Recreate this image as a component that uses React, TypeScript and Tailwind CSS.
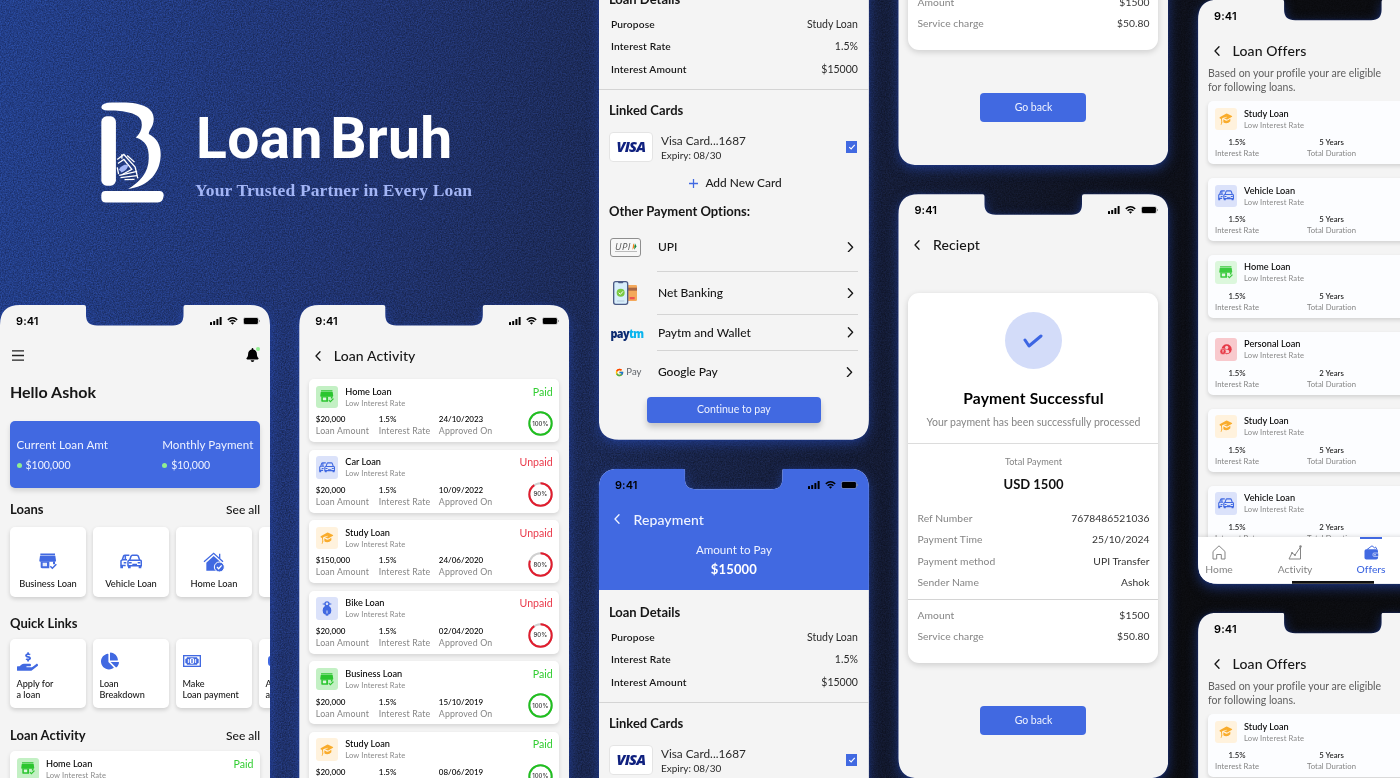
import type { ReactNode } from "react";
import { FaBell, FaChartPie, FaHandHoldingUsd } from "react-icons/fa";
import { FcGoogle } from "react-icons/fc";

type IconName = "store" | "cars" | "study" | "bike" | "person";

const tones: Record<string, string> = {
  green: "bg-[#c3f0c4] text-[#2bc52f]",
  mint: "bg-[#dcf7dc] text-[#3ccb3f]",
  blue: "bg-[#dbe2fa] text-[#4169e1]",
  orange: "bg-[#fff2dd] text-[#f9ac2c]",
  red: "bg-[#f8c9cd] text-[#e63946]",
};

function StoreIcon({ className }: { className: string }) {
  return (
    <svg viewBox="0 0 54 50" className={className} fill="currentColor">
      <path d="M4 1h44v5H4zM3 8h46l2 14c0 3-2 4-4 4H5c-3 0-4-2-4-4z" />
      <path d="M5 25h26v20H9c-3 0-4-1-4-4z" />
      <path d="M11 29h13v10H11z" fill="#fff" fillOpacity=".85" />
      <path d="M42 25h6v8h-6z" />
      <path d="M34 39l6 6 12-12" fill="none" stroke="currentColor" strokeWidth="4.500" />
    </svg>
  );
}

function CarsIcon({ className }: { className: string }) {
  return (
    <svg viewBox="0 0 66 44" className={className} fill="none" stroke="currentColor" strokeWidth="4.500">
      <path d="M29 18l4-12q1-3 4-3h14q3 0 4 3l4 12" />
      <path d="M24 35V22q0-4 4-4h32q4 0 4 4v13z" />
      <path d="M27 26h8M53 26h8M37 31h14" />
      <path d="M24 34h8v8h-8zM56 34h8v8h-8z" fill="currentColor" stroke="none" />
      <path d="M28 3H15q-3 0-4 2L7 17l-4 3v14h14M6 17h15M11 26h8M16 5v14" />
      <path d="M1 34h8v8H1z" fill="currentColor" stroke="none" />
    </svg>
  );
}

function StudyIcon({ className }: { className: string }) {
  return (
    <svg viewBox="0 0 40 36" className={className} fill="currentColor">
      <path d="M1 13L20 2q2-1 4 0l14 7q1 1 0 2L25 19q-2 1-4 0l-7-3 9-3-1-2-12 4q-2 1-2 3l1 11q-3 3-3 7H4l2-10-1-8-4-2q-1-1 0-2z" />
      <path d="M12 19l8 4q3 1 6-1l7-5v8q-5 6-12 6-6 0-9-3z" />
    </svg>
  );
}

function BikeIcon({ className }: { className: string }) {
  return (
    <svg viewBox="0 0 30 44" className={className} fill="currentColor">
      <path d="M2 7h8v3H2zM20 7h8v3h-8z" />
      <circle cx="15" cy="8" r="6" fill="none" stroke="currentColor" strokeWidth="4" />
      <path d="M10 13h10q8 6 8 15 0 8-5 11h-3q0 5-5 5t-5-5H7q-5-3-5-11 0-9 8-15z" />
      <path d="M13.500 28h3v9h-3z" fill="#dbe2fa" />
    </svg>
  );
}

function PersonIcon({ className }: { className: string }) {
  return (
    <svg viewBox="0 0 36 32" className={className} fill="currentColor">
      <circle cx="20" cy="15" r="15" />
      <circle cx="20" cy="10" r="5" fill="#f8c9cd" />
      <path d="M12 22q1-6 8-6t8 6-8 5q-8 0-8-5z" fill="#f8c9cd" />
      <circle cx="9" cy="22" r="9" stroke="#f8c9cd" strokeWidth="1.5" />
      <path d="M6 18h6M6 21h6M7 18q5 0 4 3-1 2-4 2l4 4" fill="none" stroke="#f8c9cd" strokeWidth="1.5" />
    </svg>
  );
}

function LoanIcon({ name }: { name: IconName }) {
  if (name === "store") return <StoreIcon className="h-[13px] w-[14px]" />;
  if (name === "cars") return <CarsIcon className="h-[11px] w-[16px]" />;
  if (name === "study") return <StudyIcon className="h-[12px] w-[14px]" />;
  if (name === "bike") return <BikeIcon className="h-[15px] w-[10px]" />;
  return <PersonIcon className="h-[11px] w-[12px]" />;
}

function Tile({ name, tone }: { name: IconName; tone: string }) {
  return (
    <div className={`flex h-[22.5px] w-[22.5px] shrink-0 items-center justify-center rounded-[3px] ${tones[tone]}`}>
      <LoanIcon name={name} />
    </div>
  );
}

function Chevron({ className, back = false }: { className: string; back?: boolean }) {
  return (
    <svg viewBox="0 0 6 10" className={className} fill="none" stroke="currentColor" strokeWidth="1.3" strokeLinecap="round" strokeLinejoin="round">
      <path d={back ? "M5 .8L1 5l4 4.2" : "M1 .8L5 5 1 9.2"} />
    </svg>
  );
}

function StatusBar() {
  return (
    <div className="flex h-[20px] shrink-0 items-center justify-between pt-[12px] pr-[10.500px] pl-[16px] text-black">
      <span className="font-[Inter] text-[11px] leading-[12px] font-semibold tracking-[0.1px]">9:41</span>
      <span className="flex items-center gap-[5px]">
        <svg viewBox="0 0 12 8" className="h-[8px] w-[12px]" fill="currentColor">
          <rect x="0" y="5" width="2" height="3" rx=".5" />
          <rect x="3.2" y="4" width="2" height="4" rx=".5" />
          <rect x="6.4" y="2" width="2" height="6" rx=".5" />
          <rect x="9.6" y="0" width="2" height="8" rx=".5" />
        </svg>
        <svg viewBox="0 0 12 9" className="h-[8px] w-[11px]" fill="none" stroke="currentColor" strokeWidth="1.6">
          <path d="M.7 3.2q5.300-4.600 10.600 0M2.700 5.300q3.300-2.800 6.600 0" />
          <path d="M4.400 6.800q1.600-1.300 3.200 0L6 8.500z" fill="currentColor" strokeWidth=".3" />
        </svg>
        <svg viewBox="0 0 17 8" className="h-[8px] w-[17px]">
          <rect x=".4" y=".4" width="15" height="7.200" rx="2" fill="none" stroke="#999" strokeWidth=".5" />
          <rect x=".9" y=".9" width="14" height="6.200" rx="1.300" fill="#000" />
          <path d="M16 2.700q1 .5 1 1.300t-1 1.300z" fill="#888" />
        </svg>
      </span>
    </div>
  );
}

function Phone({ children }: { children: ReactNode }) {
  return (
    <div className="h-[584px] w-[270px] shrink-0 [filter:drop-shadow(0_0_1px_rgba(30,60,160,0.5))_drop-shadow(0_4px_6px_rgba(38,76,190,0.55))]">
      <div className="flex h-full w-full flex-col overflow-hidden bg-[#f4f4f4] [clip-path:path('M0_20Q0_0_20_0H84Q86_0_86_2V10Q86_20.500_97_20.500H173Q183.500_20.500_183.500_10V2Q183.500_0_185.500_0H250Q270_0_270_20V564Q270_584_250_584H20Q0_584_0_564Z')]">
        {children}
      </div>
    </div>
  );
}

function TitleBar({ title, className }: { title: string; className: string }) {
  return (
    <div className={`flex h-[20px] shrink-0 items-center gap-[13px] pl-[15.500px] text-[14px] font-medium tracking-[0.12px] ${className}`}>
      <Chevron back className="h-[10px] w-[6px]" />
      <span>{title}</span>
    </div>
  );
}

function Ring({ value }: { value: number }) {
  const length = 2 * Math.PI * 11.2;
  const done = value === 100;
  return (
    <div className="grid h-[25px] w-[25px] place-items-center">
      <svg viewBox="0 0 25 25" className="col-start-1 row-start-1 h-[25px] w-[25px] -rotate-90" fill="none" strokeWidth="2">
        <circle cx="12.5" cy="12.5" r="11.2" stroke="#d0d0d0" />
        <circle cx="12.5" cy="12.5" r="11.2" stroke={done ? "#20c020" : "#e11d2e"} strokeDasharray={`${(length * value) / 100} ${length}`} />
      </svg>
      <span className="col-start-1 row-start-1 font-[Inter] text-[6px] leading-none font-medium text-[#333]">{value}%</span>
    </div>
  );
}

type Activity = { name: string; icon: IconName; tone: string; amount: string; date: string; value: number };

const activities: Activity[] = [
  { name: "Home Loan", icon: "store", tone: "green", amount: "$20,000", date: "24/10/2023", value: 100 },
  { name: "Car Loan", icon: "cars", tone: "blue", amount: "$20,000", date: "10/09/2022", value: 90 },
  { name: "Study Loan", icon: "study", tone: "orange", amount: "$150,000", date: "24/06/2020", value: 80 },
  { name: "Bike Loan", icon: "bike", tone: "blue", amount: "$20,000", date: "02/04/2020", value: 90 },
  { name: "Business Loan", icon: "store", tone: "green", amount: "$20,000", date: "15/10/2019", value: 100 },
  { name: "Study Loan", icon: "study", tone: "orange", amount: "$20,000", date: "08/06/2019", value: 100 },
];

function CardHeading({ name, icon, tone }: { name: string; icon: IconName; tone: string }) {
  return (
    <div className="flex h-[23px] gap-[7px]">
      <Tile name={icon} tone={tone} />
      <div className="whitespace-nowrap">
        <div className="text-[9.200px] leading-[12px] font-medium text-black">{name}</div>
        <div className="text-[7.600px] leading-[11.500px] tracking-[0.1px] text-[#8a8a8a]">Low Interest Rate</div>
      </div>
    </div>
  );
}

function ActivityCard({ item }: { item: Activity }) {
  const paid = item.value === 100;
  const facts = [
    [item.amount, "Loan Amount"],
    ["1.5%", "Interest Rate"],
    [item.date, "Approved On"],
  ];
  return (
    <div className="flex h-[63px] shrink-0 justify-between rounded-[5px] bg-white px-[6.500px] pt-[6.500px] shadow-[0_2px_4px_rgba(0,0,0,0.13)]">
      <div>
        <CardHeading name={item.name} icon={item.icon} tone={item.tone} />
        <div className="mt-[4.800px] grid grid-cols-[63px_60px_60px] whitespace-nowrap">
          {facts.map(([value, label]) => (
            <div key={label}>
              <div className="text-[8px] leading-[12px] font-medium text-black">{value}</div>
              <div className="text-[8.800px] leading-[11.500px] tracking-[0.16px] text-[#858585]">{label}</div>
            </div>
          ))}
        </div>
      </div>
      <div className="flex flex-col items-end gap-[12.500px]">
        <span className={`text-[10.600px] leading-[13px] ${paid ? "text-[#32cd32]" : "text-[#ea3a4b]"}`}>{paid ? "Paid" : "Unpaid"}</span>
        <Ring value={item.value} />
      </div>
    </div>
  );
}

function SectionTitle({ title, link, className }: { title: string; link?: string; className: string }) {
  return (
    <div className={`flex h-[16px] shrink-0 items-center justify-between px-[10px] text-[13px] ${className}`}>
      <span className="font-bold">{title}</span>
      {link && <span className="text-[12px] font-medium">{link}</span>}
    </div>
  );
}

function HouseIcon() {
  return (
    <svg viewBox="0 0 66 64" className="h-[22px] w-[22px]">
      <path d="M3 31L32 6l28 25M50 7v15" fill="none" stroke="#4169e1" strokeWidth="4" />
      <path d="M32 14l23 20v24H10V34z" fill="#4169e1" />
      <circle cx="49" cy="47" r="15" fill="#4169e1" stroke="#fff" strokeWidth="3" />
      <path d="M42 47l5 5 9-10" fill="none" stroke="#fff" strokeWidth="4" />
    </svg>
  );
}

function CashIcon() {
  return (
    <svg viewBox="0 0 54 36" className="h-[12px] w-[18px]" fill="none" stroke="#4169e1">
      <rect x="2" y="2" width="50" height="32" strokeWidth="4" />
      <path d="M7 12q5 0 5-5h30q0 5 5 5v12q-5 0-5 5H12q0-5-5-5z" fill="#4169e1" stroke="none" />
      <ellipse cx="27" cy="18" rx="7" ry="9" fill="#fff" stroke="none" />
      <path d="M27 11v14" strokeWidth="4" />
      <path d="M16 12v12M38 12v12" stroke="#fff" strokeWidth="3" />
    </svg>
  );
}

function HomePhone() {
  return (
    <Phone>
      <StatusBar />
      <div className="mt-[22px] flex h-[16px] shrink-0 items-center justify-between pr-[11px] pl-[12px]">
        <svg viewBox="0 0 12 11" className="h-[11px] w-[12px]" stroke="#222" strokeWidth="1.300">
          <path d="M0 .8h12M0 5.500h12M0 10.200h12" />
        </svg>
        <div className="relative">
          <FaBell className="h-[14px] w-[13px] text-black" />
          <span className="absolute -top-[1px] -right-[1px] h-[4px] w-[4px] rounded-full bg-[#90ee90]" />
        </div>
      </div>
      <div className="mt-[19px] flex h-[20px] shrink-0 items-center pl-[10px] text-[16px] font-bold">Hello Ashok</div>
      <div className="mx-[10px] mt-[19px] flex h-[67px] shrink-0 justify-between rounded-[5px] bg-[#4169e1] px-[6.500px] pt-[16px] text-[#eef2ff] shadow-[0_3px_5px_rgba(0,0,0,0.13)]">
        {[
          ["Current Loan Amt", "$100,000"],
          ["Monthly Payment", "$10,000"],
        ].map(([label, value]) => (
          <div key={label}>
            <div className="text-[11.600px] leading-[16px] tracking-[0.08px]">{label}</div>
            <div className="mt-[4px] flex items-center gap-[4px] text-[10.500px] leading-[16px]">
              <span className="h-[5px] w-[5px] rounded-full bg-[#90ee90]" />
              {value}
            </div>
          </div>
        ))}
      </div>
      <SectionTitle className="mt-[14px]" title="Loans" link="See all" />
      <div className="mt-[9px] ml-[10px] flex gap-[7px]">
        {["Business Loan", "Vehicle Loan", "Home Loan", ""].map((name) => (
          <div key={name} className="flex h-[70px] w-[76px] shrink-0 flex-col items-center rounded-[5px] bg-white pt-[23px] text-[9.300px] font-medium shadow-[0_2px_4px_rgba(0,0,0,0.16)]">
            <div className="flex h-[23px] items-center text-[#4169e1]">
              {name === "Business Loan" && <StoreIcon className="h-[17px] w-[18px]" />}
              {name === "Vehicle Loan" && <CarsIcon className="h-[15px] w-[22px]" />}
              {name === "Home Loan" && <HouseIcon />}
            </div>
            <span className="mt-[5px] leading-[12px] whitespace-nowrap">{name}</span>
          </div>
        ))}
      </div>
      <SectionTitle className="mt-[19px]" title="Quick Links" />
      <div className="mt-[7px] ml-[10px] flex gap-[7px]">
        {[
          ["Apply for", "a loan"],
          ["Loan", "Breakdown"],
          ["Make", "Loan payment"],
          ["A", "a"],
        ].map(([top, bottom], i) => (
          <div key={top} className="flex h-[69px] w-[76px] shrink-0 flex-col rounded-[5px] bg-white px-[6.500px] pt-[10px] text-[9.100px] font-medium shadow-[0_2px_4px_rgba(0,0,0,0.16)]">
            <div className="flex h-[24px] items-center text-[#4169e1]">
              {i === 0 && <FaHandHoldingUsd className="h-[21px] w-[21px]" />}
              {i === 1 && <FaChartPie className="ml-[1.500px] h-[18px] w-[18px]" />}
              {i === 2 && <CashIcon />}
              {i === 3 && <span className="ml-[2px] h-[10px] w-[10px] rounded-[3px] bg-[#4169e1]" />}
            </div>
            <span className="mt-[4.500px] leading-[11.500px] whitespace-nowrap">
              {top}
              <br />
              {bottom}
            </span>
          </div>
        ))}
      </div>
      <SectionTitle className="mt-[20px]" title="Loan Activity" link="See all" />
      <div className="mx-[10px] mt-[7px]">
        <ActivityCard item={activities[0]} />
      </div>
    </Phone>
  );
}

function ActivityPhone() {
  return (
    <Phone>
      <StatusBar />
      <TitleBar title="Loan Activity" className="mt-[20.500px]" />
      <div className="mx-[10px] mt-[13.500px] flex flex-col gap-[7.600px]">
        {activities.map((item) => (
          <ActivityCard key={item.date} item={item} />
        ))}
      </div>
    </Phone>
  );
}

function OptionRow({ label, logo, className, arrow }: { label: string; logo: ReactNode; className: string; arrow: string }) {
  return (
    <div className={`flex shrink-0 items-center text-[12px] font-medium ${className}`}>
      <div className="flex w-[59px] justify-center">{logo}</div>
      <span className="flex-1">{label}</span>
      <Chevron className={`h-[10.500px] w-[7px] ${arrow}`} />
    </div>
  );
}

function NetBankingLogo() {
  return (
    <svg viewBox="0 0 72 72" className="mr-[6px] h-[24px] w-[24px]">
      <rect x="38" y="12" width="34" height="48" rx="4" fill="#f4a95b" />
      <path d="M38 20h34v9H38z" fill="#a86543" />
      <path d="M50 48h15v7H50z" fill="#ef5350" />
      <rect x="2" y="2" width="42" height="68" rx="6" fill="#d8eefb" stroke="#4c5b86" strokeWidth="4" />
      <path d="M14 2h18l-3 5H17z" fill="#4c5b86" />
      <circle cx="23" cy="35" r="12" fill="#7ac943" />
      <path d="M17 35l5 5 8-9" fill="none" stroke="#fff" strokeWidth="3" />
      <path d="M12 60h22" stroke="#b4c8da" strokeWidth="3" />
    </svg>
  );
}

function UpiLogo() {
  return (
    <div className="mr-[5px] flex h-[19px] w-[31px] flex-col items-center justify-center rounded-[3px] border border-[#8e8e8e] bg-[#f7f7f7]">
      <div className="flex items-center gap-[1px]">
        <span className="font-['Open_Sans'] text-[9.500px] leading-[9px] font-medium tracking-[0.5px] text-[#555] italic">UPI</span>
        <svg viewBox="0 0 6 8" className="h-[7px] w-[5px]">
          <path d="M1.500 0l2 4-3 4z" fill="#f58220" />
          <path d="M3.500 0l2 4-3 4z" fill="#128a43" />
        </svg>
      </div>
      <span className="h-[1px] w-[22px] bg-[#bbb]" />
    </div>
  );
}

function RepaymentPhone() {
  return (
    <Phone>
      <div className="h-[121.500px] shrink-0 bg-[#4169e1]">
        <StatusBar />
        <TitleBar title="Repayment" className="mt-[20.500px] text-[#f0f4ff]" />
        <div className="mt-[12px] text-center text-[11.600px] leading-[18px] text-[#eef2ff]">Amount to Pay</div>
        <div className="mt-[1px] text-center text-[13px] leading-[18px] font-bold tracking-[0.2px] text-white">$15000</div>
      </div>
      <SectionTitle className="mt-[14.500px]" title="Loan Details" />
      <div className="mt-[5px] flex flex-col px-[12px] text-[10.200px] leading-[22.500px]">
        {[
          ["Puropose", "Study Loan"],
          ["Interest Rate", "1.5%"],
          ["Interest Amount", "$15000"],
        ].map(([label, value]) => (
          <div key={label} className="flex justify-between">
            <span className="font-semibold tracking-[0.16px]">{label}</span>
            <span className="-mr-[1px] text-[10.500px] text-[#2a2a2a]">{value}</span>
          </div>
        ))}
      </div>
      <div className="mt-[9px] h-px shrink-0 bg-[#d4d4d4]" />
      <SectionTitle className="mt-[13px]" title="Linked Cards" />
      <div className="mt-[13px] flex h-[30px] shrink-0 items-center pr-[11.500px] pl-[10px]">
        <div className="flex h-[30px] w-[44px] items-center justify-center rounded-[4px] border border-[#e4e4e4] bg-white font-['Open_Sans'] text-[14.500px] font-extrabold tracking-[-0.8px] text-[#10217f] italic">
          VISA
        </div>
        <div className="ml-[8px] flex-1 text-[#2a2a2a]">
          <div className="text-[11.800px] leading-[15px]">Visa Card...1687</div>
          <div className="text-[10px] leading-[14px]">Expiry: 08/30</div>
        </div>
        <div className="flex h-[11.500px] w-[11.500px] items-center justify-center bg-[#4169e1]">
          <svg viewBox="0 0 8 7" className="h-[6px] w-[8px]" fill="none" stroke="#fff" strokeWidth="1.300">
            <path d="M.8 3.600L3 5.800 7.200.9" />
          </svg>
        </div>
      </div>
      <div className="mt-[12px] flex h-[18px] shrink-0 items-center gap-[7px] pl-[90.500px] text-[11.900px] font-medium text-[#222]">
        <svg viewBox="0 0 10 10" className="h-[9px] w-[9px]" stroke="#4169e1" strokeWidth="1.400">
          <path d="M5 0v10M0 5h10" />
        </svg>
        Add New Card
      </div>
      <SectionTitle className="mt-[12px]" title="Other Payment Options:" />
      <OptionRow label="UPI" className="mt-[17px] h-[20px]" arrow="mr-[14.500px]" logo={<UpiLogo />} />
      <div className="mt-[14px] mr-[11px] ml-[58px] h-px shrink-0 bg-[#d4d4d4]" />
      <OptionRow label="Net Banking" className="mt-[9px] h-[24px]" arrow="mr-[15px]" logo={<NetBankingLogo />} />
      <div className="mt-[9px] mr-[11px] ml-[58px] h-px shrink-0 bg-[#d4d4d4]" />
      <OptionRow
        label="Paytm and Wallet"
        className="mt-[7.500px] h-[20px]"
        arrow="mr-[14.500px]"
        logo={
          <span className="-ml-[2px] scale-x-[0.83] font-['Open_Sans'] text-[13px] leading-[14px] font-extrabold tracking-[-0.7px] text-[#0b2a70]">
            pay<span className="text-[#0bb5ee]">tm</span>
          </span>
        }
      />
      <div className="mt-[7.500px] mr-[11px] ml-[58px] h-px shrink-0 bg-[#d4d4d4]" />
      <OptionRow
        label="Google Pay"
        className="mt-[11px] h-[20px]"
        arrow="mr-[15.500px]"
        logo={
          <span className="flex items-center gap-[2px] text-[9.500px] font-normal text-[#5f6368]">
            <FcGoogle className="h-[9px] w-[9px]" />
            Pay
          </span>
        }
      />
      <div className="mt-[14.500px] ml-[48px] flex h-[26px] w-[174px] shrink-0 items-center justify-center rounded-[4px] bg-[#4169e1] text-[10.500px] text-[#eef2ff] shadow-[0_4px_6px_rgba(0,0,0,0.2)]">
        Continue to pay
      </div>
    </Phone>
  );
}

function PlainRows({ rows }: { rows: string[][] }) {
  return (
    <>
      {rows.map(([label, value]) => (
        <div key={label} className="flex justify-between px-[9px] text-[10.300px] leading-[21.500px] tracking-[0.05px]">
          <span className="text-[#858585]">{label}</span>
          <span className="text-[#333]">{value}</span>
        </div>
      ))}
    </>
  );
}

function ReceiptPhone() {
  return (
    <Phone>
      <StatusBar />
      <TitleBar title="Reciept" className="mt-[20.700px]" />
      <div className="mx-[10px] mt-[38.300px] flex h-[370px] shrink-0 flex-col rounded-[11px] bg-white shadow-[0_2px_6px_rgba(0,0,0,0.16)]">
        <div className="mt-[19px] flex h-[57px] w-[57px] shrink-0 items-center justify-center self-center rounded-full bg-[#d3dcf9]">
          <svg viewBox="0 0 20 14" className="h-[14px] w-[20px]" fill="none" stroke="#3d66e3" strokeWidth="3" strokeLinecap="round" strokeLinejoin="round">
            <path d="M2 6l4 6L18 2" />
          </svg>
        </div>
        <div className="mt-[19px] text-center text-[15.600px] leading-[20px] font-bold tracking-[0.18px] text-black">Payment Successful</div>
        <div className="mt-[4px] text-center text-[10.500px] leading-[20px] text-[#858585]">Your payment has been successfully processed</div>
        <div className="mt-[10.500px] h-px shrink-0 bg-[#dcdcdc]" />
        <div className="mt-[11.500px] text-center text-[9.200px] leading-[14px] text-[#858585]">Total Payment</div>
        <div className="mt-[6px] mb-[14.500px] text-center text-[13px] leading-[18px] font-bold text-[#111]">USD 1500</div>
        <PlainRows
          rows={[
            ["Ref Number", "7678486521036"],
            ["Payment Time", "25/10/2024"],
            ["Payment method", "UPI Transfer"],
            ["Sender Name", "Ashok"],
          ]}
        />
        <div className="mt-[5px] mb-[5px] h-px shrink-0 bg-[#d4d4d4]" />
        <PlainRows
          rows={[
            ["Amount", "$1500"],
            ["Service charge", "$50.80"],
          ]}
        />
      </div>
      <div className="mt-[43px] flex h-[29px] w-[106px] shrink-0 items-center justify-center self-center rounded-[4px] bg-[#4169e1] text-[10.500px] text-[#eef2ff]">Go back</div>
    </Phone>
  );
}

const offers: { name: string; icon: IconName; tone: string; years: number }[] = [
  { name: "Study Loan", icon: "study", tone: "orange", years: 5 },
  { name: "Vehicle Loan", icon: "cars", tone: "blue", years: 5 },
  { name: "Home Loan", icon: "store", tone: "mint", years: 5 },
  { name: "Personal Loan", icon: "person", tone: "red", years: 2 },
  { name: "Study Loan", icon: "study", tone: "orange", years: 5 },
  { name: "Vehicle Loan", icon: "cars", tone: "blue", years: 2 },
];

function OffersPhone() {
  return (
    <Phone>
      <StatusBar />
      <TitleBar title="Loan Offers" className="mt-[21px]" />
      <div className="mt-[6.500px] shrink-0 pl-[10px] text-[10.500px] leading-[13.700px] text-[#606060]">
        Based on your profile your are eligible
        <br />
        for following loans.
      </div>
      <div className="mt-[6.500px] flex min-h-0 flex-1 flex-col gap-[13.900px] overflow-hidden px-[10px]">
        {offers.map((offer, i) => (
          <div key={i} className="h-[63px] shrink-0 rounded-[5px] bg-[#fcfdff] px-[6.500px] pt-[6.500px] shadow-[0_2px_4px_rgba(0,0,0,0.14)]">
            <CardHeading name={offer.name} icon={offer.icon} tone={offer.tone} />
            <div className="mt-[6.500px] grid grid-cols-[45px_144px] text-center whitespace-nowrap">
              <span className="text-[7.800px] leading-[11px] font-medium">1.5%</span>
              <span className="text-[7.800px] leading-[11px] font-medium">{offer.years} Years</span>
              <span className="text-[7.700px] leading-[11px] tracking-[0.06px] text-[#858585]">Interest Rate</span>
              <span className="text-[7.700px] leading-[11px] tracking-[0.06px] text-[#858585]">Total Duration</span>
            </div>
          </div>
        ))}
      </div>
      <div className="flex h-[47px] shrink-0 flex-col justify-between bg-white shadow-[0_-1px_4px_rgba(0,0,0,0.12)]">
        <div className="flex text-[10.300px] text-[#858585]">
          <div className="flex w-[42px] flex-col items-center pt-[8px]">
            <svg viewBox="0 0 14 15" className="h-[15px] w-[14px]" fill="none" stroke="currentColor">
              <path d="M1 6.500L7 .8l6 5.700V14H9.300V9.500H4.700V14H1z" strokeLinejoin="round" />
            </svg>
            <span className="mt-[3px] leading-[13px]">Home</span>
          </div>
          <div className="ml-[33px] flex w-[44px] flex-col items-center pt-[8px]">
            <svg viewBox="0 0 14 15" className="h-[15px] w-[14px]" fill="none" stroke="currentColor">
              <path d="M1 14L4 8l3 2 5.500-8V14z" />
              <circle cx="4" cy="8" r="1" fill="currentColor" stroke="none" />
              <circle cx="7" cy="10" r="1" fill="currentColor" stroke="none" />
              <circle cx="12.500" cy="1.500" r="1.200" fill="currentColor" stroke="none" />
            </svg>
            <span className="mt-[3px] leading-[13px]">Activity</span>
          </div>
          <div className="ml-[32px] flex w-[44px] flex-col items-center text-[#4169e1]">
            <span className="h-[2.500px] w-[22px] bg-[#4169e1]" />
            <svg viewBox="0 0 15 15" className="mt-[5.500px] h-[15px] w-[15px]">
              <path d="M3 4.500L8 .8l2.500 2 1-.8L13 4.500" fill="none" stroke="#4169e1" />
              <rect x=".5" y="4.300" width="13.500" height="10.200" rx="1.800" fill="#4169e1" />
              <rect x="9" y="8" width="5.500" height="3.400" rx="1" fill="#4169e1" stroke="#fff" strokeWidth=".6" />
              <circle cx="11" cy="9.700" r=".7" fill="#fff" />
            </svg>
            <span className="mt-[3px] leading-[13px] font-medium">Offers</span>
          </div>
        </div>
        <div className="ml-[94px] h-[2.500px] w-[82px] bg-[#111]" />
      </div>
    </Phone>
  );
}

function Logo() {
  return (
    <svg viewBox="60 62 196 310" className="h-[103px] w-[65px] shrink-0" fill="#fff">
      <rect x="64" y="108" width="44" height="209" rx="16" />
      <path d="M76 333h163q13 0 13 14-2 21-18 21H78q-14 0-14-14v-8q0-13 12-13z" />
      <path d="M64 80Q66 66 96 66h30C190 66 222 84 222 115c0 25-14 32-15 46 25 13 37 34 36 66-3 63-50 95-98 100 35-22 61-48 62-92 1-35-10-53-39-63 17-15 21-33 16-52C177 98 130 90 90 90Q64 92 64 80z" />
      <g fill="none" stroke="#fff" strokeWidth="4">
        <path d="M112 238l20-15 34 38 8 34" />
        <path d="M114 250l18-12 24 30-30 16" />
        <path d="M118 286l54-12M122 293l50-6M134 299l30-1M112 262l4 20M126 222v14M142 226l22 20" />
      </g>
      <path d="M117 268q10-16 28-15 0 16-20 24z" fill="#a3b5f5" />
    </svg>
  );
}

function Backdrop() {
  return (
    <svg className="absolute inset-0 h-full w-full opacity-25 mix-blend-overlay" aria-hidden="true">
      <filter id="grain" x="0" y="0" width="100%" height="100%" colorInterpolationFilters="sRGB">
        <feTurbulence type="fractalNoise" baseFrequency="0.75" numOctaves="2" />
        <feColorMatrix type="matrix" values="1.8 0 0 0 -0.4 1.8 0 0 0 -0.4 1.8 0 0 0 -0.4 0 0 0 0 1" />
      </filter>
      <rect width="100%" height="100%" filter="url(#grain)" />
    </svg>
  );
}

export default function App() {
  return (
    <div className="relative h-[778px] w-[1400px] overflow-hidden bg-[linear-gradient(100deg,#233f8a_0%,#20336f_25%,#1a2750_46%,#12182d_66%,#0b0c10_84%)] font-[Lato,sans-serif] text-[#161616] [font-variant-ligatures:none]">
      <Backdrop />
      <main className="relative flex gap-[29.600px]">
        <section className="flex h-[778px] w-[569.300px] shrink-0 flex-col">
          <header className="flex h-[305px] shrink-0 gap-[31px] pt-[101px] pl-[100px]">
            <Logo />
            <div className="whitespace-nowrap">
              <h1 className="mt-[4px] font-[Roboto,sans-serif] text-[57px] leading-[68px] font-bold tracking-[0.3px] text-white [word-spacing:-7px]">Loan Bruh</h1>
              <p className="mt-[6px] -ml-px font-['Liberation_Serif',serif] text-[17.500px] leading-[22px] font-bold tracking-[0.14px] text-[#a3b5f5]">Your Trusted Partner in Every Loan</p>
            </div>
          </header>
          <div className="flex gap-[29.300px]">
            <HomePhone />
            <ActivityPhone />
          </div>
        </section>
        <section className="-mt-[144.300px] flex shrink-0 flex-col gap-[29px]">
          <RepaymentPhone />
          <RepaymentPhone />
        </section>
        <section className="-mt-[418.800px] flex shrink-0 flex-col gap-[29px]">
          <ReceiptPhone />
          <ReceiptPhone />
        </section>
        <section className="-mt-[0.300px] flex shrink-0 flex-col gap-[29px]">
          <OffersPhone />
          <OffersPhone />
        </section>
      </main>
    </div>
  );
}
